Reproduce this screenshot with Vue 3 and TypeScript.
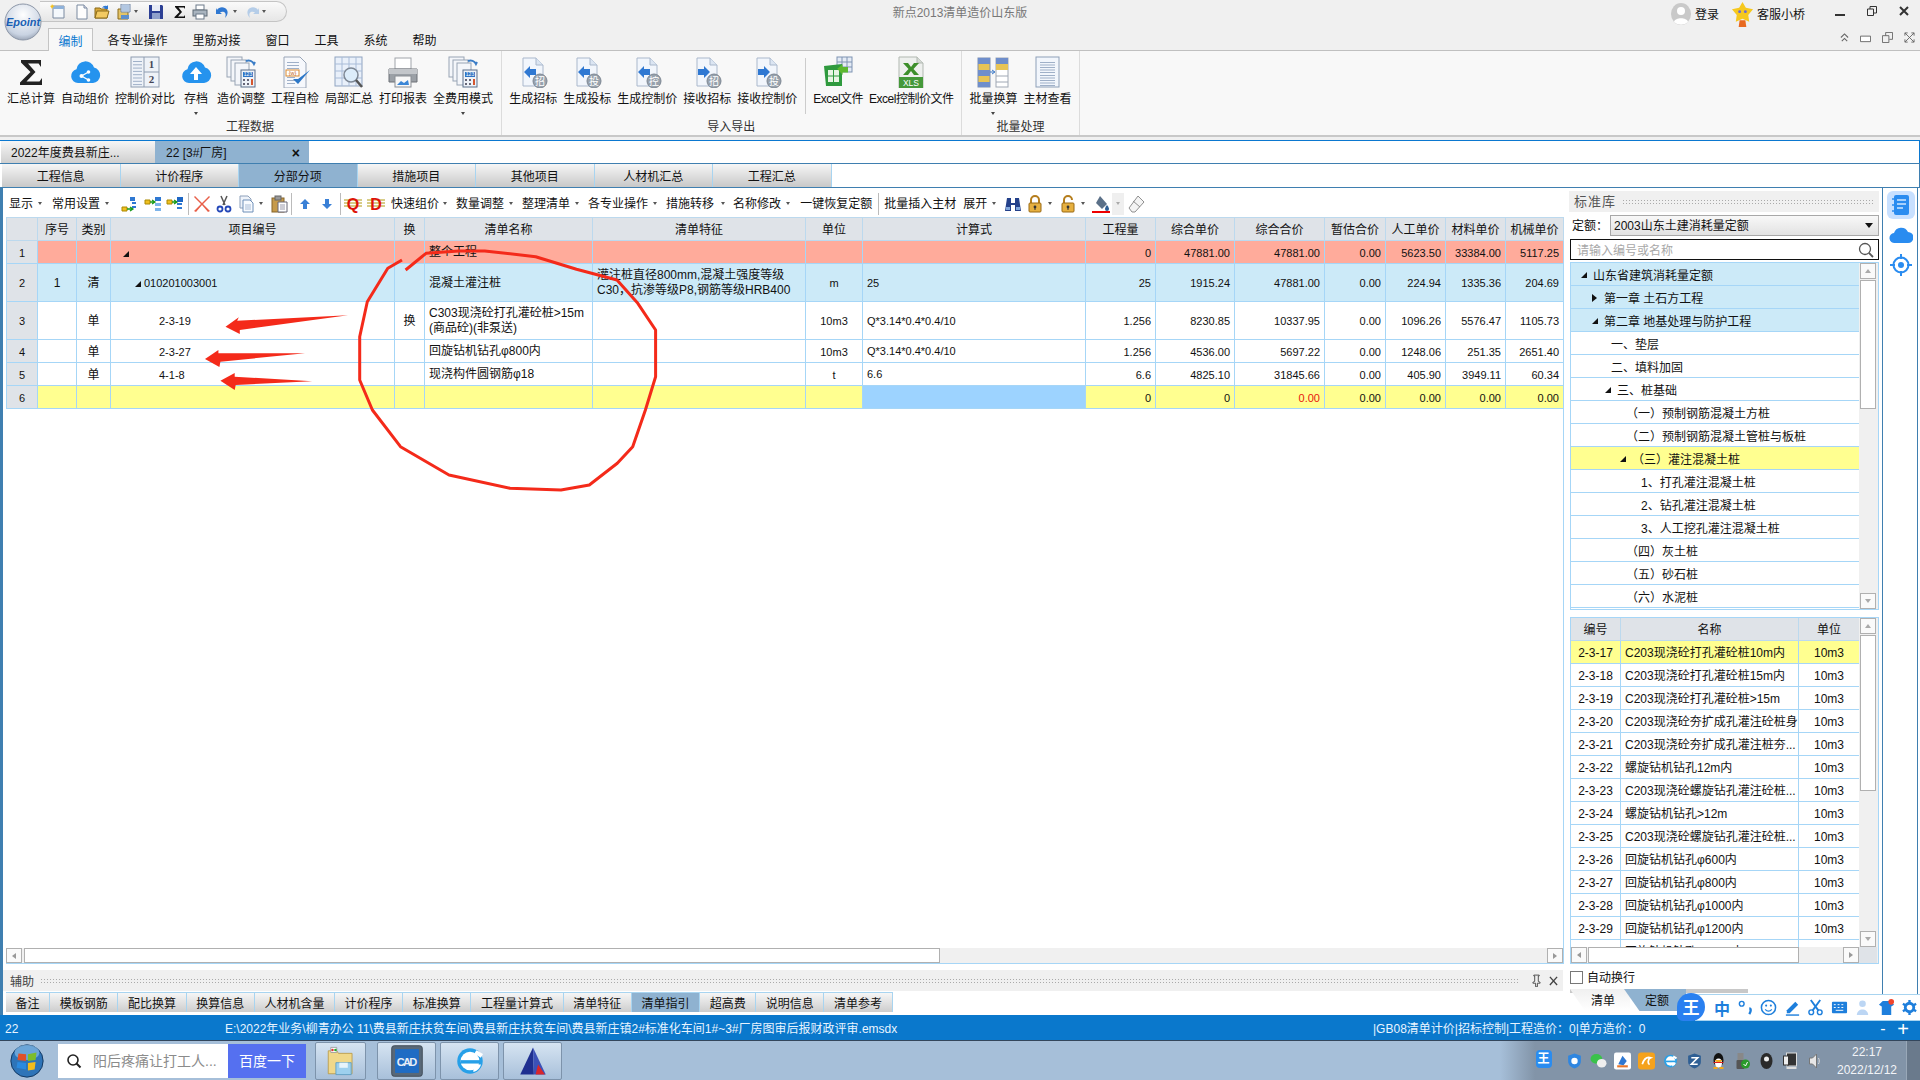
<script setup lang="ts">
// cost estimate desktop app, drawn flat with a bit of svg for icons
interface Tool { k: 'text' | 'icon' | 'caret' | 'sep' | 'box'; v?: string; ml: number }
interface RibbonItem { label: string; icon: string; caret?: boolean; wide?: boolean; tight?: boolean }

const text = (v: string, ml = 10): Tool => ({ k: 'text', v, ml })
const icon = (v: string, ml = 4): Tool => ({ k: 'icon', v, ml })
const caret = (ml = 5): Tool => ({ k: 'caret', ml })
const sep = (ml = 4): Tool => ({ k: 'sep', ml })

const cloud = 'M9 27a7 7 0 0 1-1.5-13.8 9 9 0 0 1 17.5-1.6A7.8 7.8 0 0 1 24 27z'
const page = (x: number, y: number, w: number, h: number) =>
  `<rect x="${x}" y="${y}" width="${w}" height="${h}" fill="#f4f6fa" stroke="#98a4b4"/>`
const calc = `<rect x="16" y="14" width="14" height="17" fill="#eef2f8" stroke="#5a6f8a"/><rect x="18" y="16" width="10" height="5" fill="#2f74c4"/><text x="23" y="20.4" font-size="5" fill="#fff" text-anchor="middle" font-family="Liberation Sans">123</text><path d="M18 23h2v2h-2zM22 23h2v2h-2zM18 27h2v2h-2zM22 27h2v2h-2z" fill="#667"/><path d="M26 23h2v6h-2z" fill="#d5562e"/>`
const lines = (x: number, y: number, w: number, n: number, step = 3) =>
  Array.from({ length: n }, (_, i) => `<path d="M${x} ${y + i * step + .5}h${w}" stroke="#9fb0c8"/>`).join('')
const docBadge = (dir: 'l' | 'r', ch: string) => {
  const arrow = dir === 'l' ? 'M4 12l6-6v3h6v6h-6v3z' : 'M16 12l-6-6v3H4v6h6v3z'
  return `<path d="M6 2h13l7 7v21H6z" fill="#f2f6fc" stroke="#aab8cc"/><path d="M19 2v7h7" fill="#dbe5f2" stroke="#aab8cc"/><path d="${arrow}" transform="translate(3 4)" fill="#2f78d2"/><circle cx="23" cy="25" r="7" fill="#98a2ad" stroke="#7d8793"/><text x="23" y="28.5" font-size="10" fill="#fff" text-anchor="middle" font-family="Noto Sans CJK SC">${ch}</text>`
}
const treeMove = (a: string, b: string) =>
  `<path d="M9 2h5v4H9z" fill="${a}"/><path d="M11 8h4M11 12h4" stroke="#2f78d2" stroke-width="2"/><path d="M1 12h5v4H1z" fill="${b}" stroke="#a80"/><path d="M6 14h5M9 12l3 2-3 2" stroke="#1a9a1a" fill="none" stroke-width="1.3"/>`

const icons: Record<string, string> = {
  sigma: '<path d="M6 4h20v7l-2.400-3.500H13l7.500 8.500-9 9.500h13l2.500-3.500v7H5v-2.500l10.500-10.500L6 6.500z" fill="#222"/>',
  cloudShare: `<path d="${cloud}" fill="#2593ee"/><path d="M12.500 20l7-4M12.500 20l7 4" stroke="#fff" stroke-width="1.300"/><circle cx="12.500" cy="20" r="2" fill="#fff"/><circle cx="19.500" cy="16" r="1.800" fill="#fff"/><circle cx="19.500" cy="24" r="1.800" fill="#fff"/>`,
  cloudUp: `<path d="${cloud}" fill="#2593ee"/><path d="M16 11l6 7h-4v6h-4v-6h-4z" fill="#fff"/>`,
  compare: `<rect x="2" y="1" width="28" height="30" fill="#eef2f8" stroke="#8e9cb0"/><path d="M15 1v30M15 16h15" stroke="#8e9cb0"/>${lines(4, 5, 9, 8, 3.3)}<text x="22.500" y="12" font-size="11" font-weight="700" fill="#445" text-anchor="middle" font-family="Liberation Serif">1</text><text x="22.500" y="27" font-size="11" font-weight="700" fill="#445" text-anchor="middle" font-family="Liberation Serif">2</text>`,
  adjust: `${page(2, 1, 15, 20)}${page(6, 4, 15, 21)}${page(10, 7, 14, 22)}<path d="M21 5a6 6 0 0 1 8 3l1-2" fill="none" stroke="#3b7dc6" stroke-width="2"/>${calc}`,
  check: `<path d="M5 1h16l6 6v25H5z" fill="#f6f8fc" stroke="#9aa6b8"/>${lines(8, 6, 12, 3)}${lines(8, 21, 8, 3)}<rect x="7" y="14" width="13" height="6" fill="#fff" stroke="#d98a30"/><text x="13.500" y="19" font-size="5.500" fill="#c4601a" text-anchor="middle" font-family="Liberation Sans">{w}</text><path d="M14 23l5 5 12-14-12 9z" fill="#2d78c8"/>`,
  gridMag: `<rect x="2" y="1" width="27" height="29" fill="#e9f0fa" stroke="#8fa3c0"/><path d="M2 8h27M2 15h27M2 22h27M9 1v29M16 1v29M23 1v29" stroke="#a9bcd8"/><circle cx="18" cy="19" r="7" fill="#dcecfa" stroke="#7d8794" stroke-width="1.500"/><path d="M23 24l6 7" stroke="#555" stroke-width="2.500"/>`,
  printer: `<rect x="8" y="2" width="16" height="11" fill="#fff" stroke="#a0a4aa"/><path d="M2 13h28v13H2z" fill="#9ba0a6" stroke="#6c7076"/><path d="M2 13h28v5H2z" fill="#c3c6ca"/><rect x="8" y="20" width="16" height="11" fill="#f8f8f8" stroke="#8a8e94"/><path d="M10 29l4-4 3 2 4-3 1 5z" fill="#3b86d6"/>`,
  docZhaoL: docBadge('l', '招'),
  docTouL: docBadge('l', '投'),
  docKongL: docBadge('l', '控'),
  docZhaoR: docBadge('r', '招'),
  docTouR: docBadge('r', '投'),
  excel: `<rect x="15" y="1" width="15" height="15" fill="#e4ebf5" stroke="#7e93b2"/><path d="M15 6h15M15 11h15M20 1v15M25 1v15" stroke="#7e93b2"/><path d="M2 10l18-2v22H4z" fill="#2f9a3e"/><path d="M6 14h11v12H6z" fill="#e9f5e5"/><path d="M6 20h11M11.500 14v12" stroke="#2f9a3e"/><path d="M18 12l6-5v3h6v6h-6v3z" fill="#5cb82f" transform="translate(-1 2) scale(.9)"/>`,
  xls: `<path d="M4 1h18l6 6v25H4z" fill="#eef0ee" stroke="#b1b8b1"/><path d="M22 1v6h6" fill="#d5d9d5" stroke="#b1b8b1"/><path d="M8 7h5l3 4 3-4h5l-5.500 6 5.500 6h-5l-3-4-3 4H8l5.500-6z" fill="#3d8f2b"/><path d="M4 21h24v11H4z" fill="#45993a"/><text x="16" y="30" font-size="8.500" fill="#fff" text-anchor="middle" font-family="Liberation Sans">XLS</text>`,
  batch: `<rect x="1" y="2" width="12" height="29" fill="#e8c455" stroke="#7f90ae"/><path d="M1 2h12v6H1zM1 14h12v6H1zM1 26h12v5H1z" fill="#6f8ecb"/><rect x="19" y="2" width="12" height="29" fill="#fff" stroke="#a0a8b4"/><path d="M19 2h12v6H19z" fill="#6f8ecb"/><path d="M19 8h12v6H19z" fill="#e8c455"/><path d="M19 20h12M19 26h12" stroke="#a0a8b4"/><path d="M13 16h4M15 14l3 2-3 2" stroke="#3b78c8" fill="none"/>`,
  material: `<rect x="5" y="1" width="23" height="30" fill="#f2f6fc" stroke="#8ea0b8"/>${lines(9, 6, 15, 5, 2.500)}${lines(9, 19, 15, 5, 2.500)}`,

  tree1: treeMove('#2f78d2', '#f0c020'),
  tree2: '<path d="M1 5h5v4H1z" fill="#f0c020" stroke="#a80"/><path d="M6 7h4M8 5l3 2-3 2" stroke="#1a9a1a" fill="none" stroke-width="1.300"/><path d="M11 2h6v4h-6z" fill="#2f78d2"/><path d="M11 8h6v3h-6zM11 13h6v3h-6z" fill="#7db4ea"/>',
  tree3: '<path d="M1 5h5v4H1z" fill="#f0c020" stroke="#a80"/><path d="M6 7h4M8 5l3 2-3 2" stroke="#1a9a1a" fill="none" stroke-width="1.300"/><path d="M11 2h6v5h-6z" fill="#1d66c4"/><path d="M11 9h5M11 13h5" stroke="#2f78d2" stroke-width="2"/>',
  del: '<path d="M2 1l7 7 7-7 1 1-7 7 7 7-2 1-6-7-6 7-2-1 7-7-7-7z" fill="#e8604a"/>',
  cut: '<path d="M6 1l4 9M12 1l-4 9" stroke="#555" stroke-width="1.500"/><circle cx="5" cy="14" r="2.500" fill="none" stroke="#2347b8" stroke-width="1.800"/><circle cx="13" cy="14" r="2.500" fill="none" stroke="#2347b8" stroke-width="1.800"/>',
  copy: '<path d="M3 1h8l3 3v9H3z" fill="#eef3fa" stroke="#8da0ba"/><path d="M6 5h7l3 3v9H6z" fill="#f8fbff" stroke="#6f8fb8"/><path d="M8 10h6M8 12h6M8 14h6" stroke="#a9bcd6"/>',
  paste: '<rect x="2" y="3" width="12" height="14" fill="#c69a4a" stroke="#85642a"/><rect x="5" y="1" width="6" height="4" fill="#999" stroke="#666"/><path d="M8 7h9v10H8z" fill="#fff" stroke="#667"/><path d="M10 10h5M10 12h5M10 14h5" stroke="#99a"/>',
  up: '<path d="M9 4l5 5h-3v5H7V9H4z" fill="#3a80d6"/>',
  down: '<path d="M9 14l5-5h-3V4H7v5H4z" fill="#3a80d6"/>',
  q: '<path d="M0 5h18M0 8h18M0 11h18" stroke="#b09a10"/><text x="9" y="15" font-size="16" font-weight="700" fill="#dd1408" text-anchor="middle" font-family="Liberation Sans">Q</text>',
  d: '<path d="M0 5h18M0 8h18M0 11h18" stroke="#b09a10"/><text x="9" y="15" font-size="16" font-weight="700" fill="#dd1408" text-anchor="middle" font-family="Liberation Sans">D</text>',
  binoc: '<path d="M3 3h4v5h4V3h4l2 13h-6V10H7v6H1z" fill="#23408a"/><path d="M2 12h4v3H2zM12 12h4v3h-4z" fill="#7fa6dc"/>',
  lock: '<path d="M5 9V5a4 4 0 0 1 8 0v4" fill="none" stroke="#b57d1c" stroke-width="2"/><rect x="3" y="8" width="12" height="9" rx="1" fill="#e6b040" stroke="#9a6a14"/><circle cx="9" cy="12" r="1.400" fill="#333"/><path d="M8.500 12h1v3h-1z" fill="#333"/>',
  unlock: '<path d="M5 8V5a4 4 0 0 1 8 0" fill="none" stroke="#b57d1c" stroke-width="2"/><rect x="3" y="8" width="12" height="9" rx="1" fill="#e6b040" stroke="#9a6a14"/><circle cx="9" cy="12" r="1.400" fill="#333"/><path d="M8.500 12h1v3h-1z" fill="#333"/>',
  fill: '<path d="M8 1l7 8-5 5-6-6z" fill="#5b7088"/><path d="M15 10c1.500 2 2 3 2 4a2 2 0 0 1-4 0c0-1 .5-2 2-4z" fill="#2f5f94"/><rect x="0" y="16" width="18" height="2.500" fill="#ee0000"/>',
  eraser: '<path d="M11 1l6 6-9 10H5l-3-4z" fill="#f4f4f4" stroke="#8f8f8f"/><path d="M6 6l7 6" stroke="#8f8f8f"/>',

  qNew: '<path d="M3 2h11v12H3z" fill="#f4f8fc" stroke="#7a8aa0"/><path d="M3 2h11v3H3z" fill="#8fb2da"/><path d="M2 0l1 1.500L5 2 3 3l-1 2-1-2-1-1 1.500-.5z" fill="#f6c21c"/>',
  qDoc: '<path d="M3 1h7l3 3v11H3z" fill="#fdfdfd" stroke="#7a8aa0"/><path d="M10 1v3h3" fill="#dde" stroke="#7a8aa0"/>',
  qOpen: '<path d="M1 4h5l1 1h6v9H1z" fill="#d9a93a" stroke="#8a6a1a"/><path d="M3 7h12l-2 7H1z" fill="#f3ca62" stroke="#8a6a1a"/><path d="M8 4a4 4 0 0 1 5-2l1-1v4h-4l1-1a3 3 0 0 0-3 0z" fill="#2f78d2"/>',
  qSaveAs: '<path d="M2 5h10v10H2z" fill="#e4c468" stroke="#8a6a1a"/><path d="M5 0h9v8H5z" fill="#e6eef8" stroke="#7288a8"/><path d="M6 2h7M6 4h7M6 6h7" stroke="#7ea0cc"/><path d="M5 11h8v4H5z" fill="#5e8fcc"/>',
  qSave: '<path d="M1 1h13l1 1v13H1z" fill="#2c3f94"/><rect x="4" y="1" width="8" height="6" fill="#e8ecf6"/><rect x="4" y="9" width="8" height="6" fill="#8fa0cc"/>',
  qSigma: '<path d="M3 2h10v3l-1-1.500H6.500L10 8l-4 4.500h6l1-1.500v3H2.500v-1L7.500 8 3 3z" fill="#111"/>',
  qPrint: '<rect x="4" y="1" width="8" height="5" fill="#fff" stroke="#6c7a8a"/><rect x="1" y="6" width="14" height="6" fill="#a9b4bf" stroke="#5e6a76"/><rect x="4" y="10" width="8" height="5" fill="#fff" stroke="#6c7a8a"/>',
  qUndo: '<path d="M2 6a6 6 0 0 1 10 0c1.500 3 0 6-2 8 1-3 1-5-1-6-1.500-.7-3-.3-4 .5L7 10H1V4z" fill="#2f78d2"/>',
  qRedo: '<path d="M14 6a6 6 0 0 0-10 0c-1.500 3 0 6 2 8-1-3-1-5 1-6 1.500-.7 3-.3 4 .5L9 10h6V4z" fill="#b5cde8"/>',

  folder: '<path d="M5 8h10l2 3h16v24H5z" fill="#f0d88a" stroke="#b89a48"/><path d="M8 4h7v6H8z" fill="#fff" stroke="#999"/><circle cx="10" cy="7" r="1.500" fill="#d33"/><circle cx="13.500" cy="7" r="1.500" fill="#2a2"/><path d="M14 22h18v14H14z" fill="#9dd0ee" stroke="#5a9cc4"/><path d="M18 22h10v6H18z" fill="#e7f4fb"/>',
  cad: '<rect x="2" y="2" width="36" height="36" rx="3" fill="#586878" stroke="#39434e"/><rect x="6" y="6" width="28" height="28" fill="#1f6cc4"/><text x="20" y="26" font-size="13" font-weight="700" fill="#e8eef6" text-anchor="middle" font-family="Liberation Sans" textLength="24">CAD</text>',
  ie: '<circle cx="20" cy="20" r="15" fill="#27a0e8"/><circle cx="20" cy="20" r="11" fill="#fff"/><path d="M9 19h23v4H9z" fill="#27a0e8"/><path d="M24 24h9a13 13 0 0 1-9 9z" fill="#fff"/><path d="M26 9h9v5h-9z" fill="#fff" transform="rotate(30 30 11)"/>',
  tri: '<path d="M20 4L5 36h16z" fill="#1f2f90"/><path d="M20 4l15 32H21z" fill="#3b51b8"/><path d="M26 24l8 12h-11z" fill="#d8262c"/>',
  orb: '<circle cx="20" cy="20" r="17" fill="#2e74b8" stroke="#12365e"/><ellipse cx="20" cy="11" rx="13" ry="8" fill="#8cc0ea" opacity=".65"/><path d="M11 12l8 1v7l-9-1z" fill="#e0502a"/><path d="M21 13l9-2-1 8-8 1z" fill="#7cbc2c"/><path d="M10 21l9 1v7l-10-2z" fill="#2a8ae0"/><path d="M21 22l8-1-1 8-7 1z" fill="#f2bc1c"/>',
}

const ribbonGroups: { label: string; groups: (RibbonItem | null)[] }[] = [
  {
    label: '工程数据',
    groups: [
      { label: '汇总计算', icon: 'sigma' },
      { label: '自动组价', icon: 'cloudShare' },
      { label: '控制价对比', icon: 'compare' },
      { label: '存档', icon: 'cloudUp', caret: true, wide: true },
      { label: '造价调整', icon: 'adjust' },
      { label: '工程自检', icon: 'check' },
      { label: '局部汇总', icon: 'gridMag' },
      { label: '打印报表', icon: 'printer' },
      { label: '全费用模式', icon: 'adjust', caret: true },
    ],
  },
  {
    label: '导入导出',
    groups: [
      { label: '生成招标', icon: 'docZhaoL' },
      { label: '生成投标', icon: 'docTouL' },
      { label: '生成控制价', icon: 'docKongL' },
      { label: '接收招标', icon: 'docZhaoR' },
      { label: '接收控制价', icon: 'docTouR' },
      null,
      { label: 'Excel文件', icon: 'excel', tight: true },
      { label: 'Excel控制价文件', icon: 'xls', tight: true },
    ],
  },
  {
    label: '批量处理',
    groups: [
      { label: '批量换算', icon: 'batch', caret: true },
      { label: '主材查看', icon: 'material' },
    ],
  },
]

const quick: Tool[] = [
  icon('qNew', 10), icon('qDoc', 8), icon('qOpen', 4), icon('qSaveAs', 6), caret(2),
  icon('qSave', 10), icon('qSigma', 8), icon('qPrint', 4), icon('qUndo', 7), caret(2),
  icon('qRedo', 7), caret(2),
]

const tools: Tool[] = [
  text('显示', 6), caret(), text('常用设置'), caret(),
  icon('tree1', 12), icon('tree2', 5), icon('tree3', 4), sep(),
  icon('del'), icon('cut'), icon('copy'), caret(4), icon('paste', 7), sep(3),
  icon('up'), icon('down'), sep(), icon('q', 3), icon('d', 5),
  text('快速组价', 6), caret(4), text('数量调整', 9), caret(), text('整理清单', 9), caret(),
  text('各专业操作', 9), caret(), text('措施转移', 9), caret(7), text('名称修改', 8), caret(),
  text('一键恢复定额', 10), sep(6), text('批量插入主材', 5), text('展开', 7), caret(),
  icon('binoc', 8), icon('lock'), caret(4), icon('unlock', 7), caret(4), icon('fill', 7),
  { k: 'box', ml: 2 }, icon('eraser', 3),
]

const columns = [
  { t: '', w: 31 }, { t: '序号', w: 39 }, { t: '类别', w: 34 }, { t: '项目编号', w: 284 },
  { t: '换', w: 30 }, { t: '清单名称', w: 168 }, { t: '清单特征', w: 213 }, { t: '单位', w: 57 },
  { t: '计算式', w: 223 }, { t: '工程量', w: 70 }, { t: '综合单价', w: 79 }, { t: '综合合价', w: 90 },
  { t: '暂估合价', w: 61 }, { t: '人工单价', w: 60 }, { t: '材料单价', w: 60 }, { t: '机械单价', w: 58 },
]

const rows = [
  { cls: 'total', seq: '', type: '', code: '', lv: 'lv0', tri: true, swap: '', name: '整个工程', spec: '', unit: '', calc: '', nums: ['0', '47881.00', '47881.00', '0.00', '5623.50', '33384.00', '5117.25'] },
  { cls: 'bill tall', seq: '1', type: '清', code: '010201003001', lv: 'lv1', tri: true, swap: '', name: '混凝土灌注桩', spec: '灌注桩直径800mm,混凝土强度等级\nC30，抗渗等级P8,钢筋等级HRB400', unit: 'm', calc: '25', nums: ['25', '1915.24', '47881.00', '0.00', '224.94', '1335.36', '204.69'] },
  { cls: 'tall', seq: '', type: '单', code: '2-3-19', lv: 'lv2', tri: false, swap: '换', name: 'C303现浇砼打孔灌砼桩>15m\n(商品砼)(非泵送)', spec: '', unit: '10m3', calc: 'Q*3.14*0.4*0.4/10', nums: ['1.256', '8230.85', '10337.95', '0.00', '1096.26', '5576.47', '1105.73'] },
  { cls: '', seq: '', type: '单', code: '2-3-27', lv: 'lv2', tri: false, swap: '', name: '回旋钻机钻孔φ800内', spec: '', unit: '10m3', calc: 'Q*3.14*0.4*0.4/10', nums: ['1.256', '4536.00', '5697.22', '0.00', '1248.06', '251.35', '2651.40'] },
  { cls: '', seq: '', type: '单', code: '4-1-8', lv: 'lv2', tri: false, swap: '', name: '现浇构件圆钢筋φ18', spec: '', unit: 't', calc: '6.6', nums: ['6.6', '4825.10', '31845.66', '0.00', '405.90', '3949.11', '60.34'] },
  { cls: 'fresh', seq: '', type: '', code: '', lv: 'lv0', tri: false, swap: '', name: '', spec: '', unit: '', calc: '', nums: ['0', '0', '0.00', '0.00', '0.00', '0.00', '0.00'] },
]

const tree = [
  { t: '山东省建筑消耗量定额', cls: 'on', x: 22, tri: 'down' },
  { t: '第一章 土石方工程', cls: 'on', x: 33, tri: 'right' },
  { t: '第二章 地基处理与防护工程', cls: 'on', x: 33, tri: 'down' },
  { t: '一、垫层', cls: '', x: 40, tri: '' },
  { t: '二、填料加固', cls: '', x: 40, tri: '' },
  { t: '三、桩基础', cls: '', x: 46, tri: 'down' },
  { t: '（一）预制钢筋混凝土方桩', cls: '', x: 55, tri: '' },
  { t: '（二）预制钢筋混凝土管桩与板桩', cls: '', x: 55, tri: '' },
  { t: '（三）灌注混凝土桩', cls: 'pick', x: 61, tri: 'down' },
  { t: '1、打孔灌注混凝土桩', cls: '', x: 70, tri: '' },
  { t: '2、钻孔灌注混凝土桩', cls: '', x: 70, tri: '' },
  { t: '3、人工挖孔灌注混凝土桩', cls: '', x: 70, tri: '' },
  { t: '（四）灰土桩', cls: '', x: 55, tri: '' },
  { t: '（五）砂石桩', cls: '', x: 55, tri: '' },
  { t: '（六）水泥桩', cls: '', x: 55, tri: '' },
]

const quota = [
  ['2-3-17', 'C203现浇砼打孔灌砼桩10m内'], ['2-3-18', 'C203现浇砼打孔灌砼桩15m内'],
  ['2-3-19', 'C203现浇砼打孔灌砼桩>15m'], ['2-3-20', 'C203现浇砼夯扩成孔灌注砼桩身'],
  ['2-3-21', 'C203现浇砼夯扩成孔灌注桩夯...'], ['2-3-22', '螺旋钻机钻孔12m内'],
  ['2-3-23', 'C203现浇砼螺旋钻孔灌注砼桩...'], ['2-3-24', '螺旋钻机钻孔>12m'],
  ['2-3-25', 'C203现浇砼螺旋钻孔灌注砼桩...'], ['2-3-26', '回旋钻机钻孔φ600内'],
  ['2-3-27', '回旋钻机钻孔φ800内'], ['2-3-28', '回旋钻机钻孔φ1000内'],
  ['2-3-29', '回旋钻机钻孔φ1200内'], ['', '回旋钻机钻孔φ1500内'],
]

const docNav = ['工程信息', '计价程序', '分部分项', '措施项目', '其他项目', '人材机汇总', '工程汇总']
const ribbonTabs = ['各专业操作', '里筋对接', '窗口', '工具', '系统', '帮助']
const auxTabs = ['备注', '模板钢筋', '配比换算', '换算信息', '人材机含量', '计价程序', '标准换算', '工程量计算式', '清单特征', '清单指引', '超高费', '说明信息', '清单参考']
</script>

<template>
  <div class="app">
    <header class="titlebar">
      <div class="quick">
        <template v-for="(q, i) in quick" :key="i">
          <svg v-if="q.k === 'icon'" class="qi" viewBox="0 0 16 16" :style="{ marginLeft: q.ml + 'px' }" v-html="icons[q.v!]" />
          <i v-else class="caret" :style="{ marginLeft: q.ml + 'px' }" />
        </template>
      </div>
      <div class="app-title">新点2013清单造价山东版</div>
      <div class="account">
        <svg class="avatar" viewBox="0 0 20 22"><ellipse cx="10" cy="11" rx="10" ry="11" fill="#c9c9c9" /><circle cx="10" cy="8" r="4" fill="#fff" /><path d="M3 19c1-5 13-5 14 0a10 10 0 0 1-14 0z" fill="#fff" /></svg>
        <span class="login">登录</span>
        <svg class="star" viewBox="0 0 24 26"><path d="M12 0l3.500 6 7.500 1.500-5 6 1 7-7-3-7 3 1-7-5-6L8.500 6z" fill="#f6c81e" /><circle cx="9" cy="10" r="1.500" fill="#6a6ad8" /><circle cx="15" cy="10" r="1.500" fill="#6a6ad8" /><path d="M9 19h6l1 7H8z" fill="#e86a20" /></svg>
        <span class="helper">客服小桥</span>
        <svg class="winbtn first" viewBox="0 0 10 10"><path d="M0 8h10v2H0z" fill="#333" /></svg>
        <svg class="winbtn" viewBox="0 0 10 10"><path d="M.5 3h6v6.500h-6zM3 3V.5h6.500V7H7" fill="none" stroke="#333" /></svg>
        <svg class="winbtn" viewBox="0 0 10 10"><path d="M1 1l8 8M9 1l-8 8" stroke="#333" stroke-width="2" /></svg>
      </div>
    </header>
    <svg class="logo" viewBox="0 0 38 38">
      <defs><radialGradient id="lg" cx=".5" cy=".3" r=".8"><stop offset="0" stop-color="#ffffff" /><stop offset=".7" stop-color="#c9d3e2" /><stop offset="1" stop-color="#7f8a9c" /></radialGradient></defs>
      <circle cx="19" cy="19" r="18" fill="url(#lg)" stroke="#8d97a8" />
      <text x="19" y="23" font-size="11" font-weight="700" font-style="italic" fill="#1a5fb4" text-anchor="middle" font-family="Liberation Sans">Epoint</text>
    </svg>

    <nav class="ribbon-tabs">
      <span class="rtab active">编制</span>
      <span v-for="t in ribbonTabs" :key="t" class="rtab">{{ t }}</span>
      <div class="mdi">
        <svg viewBox="0 0 10 10" class="mi"><path d="M1 5l4-4 4 4M2 9l3-3 3 3" fill="none" stroke="#666" stroke-width="1.200" /></svg>
        <svg viewBox="0 0 12 10" class="mi wide"><path d="M.5 3.500h11v6H.5z" fill="#fff" stroke="#666" /></svg>
        <svg viewBox="0 0 12 12" class="mi wide"><path d="M.5 4h7v7.500h-7zM4 4V.5h7.500V8H8" fill="none" stroke="#666" /></svg>
        <svg viewBox="0 0 12 12" class="mi wide"><path d="M1 1l10 10M11 1L1 11M4 1H1v3M8 1h3v3M4 11H1V8M8 11h3V8" fill="none" stroke="#666" /></svg>
      </div>
    </nav>

    <section class="ribbon">
      <div v-for="g in ribbonGroups" :key="g.label" class="rgroup">
        <div class="ritems">
          <template v-for="(it, i) in g.groups" :key="i">
            <div v-if="it" class="ritem" :class="{ wide: it.wide, tight: it.tight }">
              <svg class="ricon" viewBox="0 0 32 32" v-html="icons[it.icon]" />
              <span class="rlabel">{{ it.label }}</span>
              <i v-if="it.caret" class="caret rcaret" />
            </div>
            <div v-else class="rsep" />
          </template>
        </div>
        <div class="rgroup-label">{{ g.label }}</div>
      </div>
    </section>

    <div class="doc-tabs">
      <span class="doc-tab">2022年度费县新庄...</span>
      <span class="doc-tab active">22 [3#厂房]<b class="doc-close">×</b></span>
    </div>
    <div class="nav-tabs">
      <span v-for="t in docNav" :key="t" class="nav-tab" :class="{ active: t === '分部分项' }">{{ t }}</span>
    </div>

    <main class="main">
      <div class="left">
        <div class="toolbar">
          <template v-for="(t, i) in tools" :key="i">
            <span v-if="t.k === 'text'" class="tb-text" :style="{ marginLeft: t.ml + 'px' }">{{ t.v }}</span>
            <svg v-else-if="t.k === 'icon'" class="tb-icon" viewBox="0 0 18 18" :style="{ marginLeft: t.ml + 'px' }" v-html="icons[t.v!]" />
            <i v-else-if="t.k === 'caret'" class="caret" :style="{ marginLeft: t.ml + 'px' }" />
            <i v-else-if="t.k === 'sep'" class="tb-sep" :style="{ marginLeft: t.ml + 'px' }" />
            <span v-else class="tb-box" :style="{ marginLeft: t.ml + 'px' }"><i class="caret pale" /></span>
          </template>
        </div>

        <div class="grid-wrap">
          <table class="grid">
            <colgroup><col v-for="(c, i) in columns" :key="i" :style="{ width: c.w + 'px' }" /></colgroup>
            <thead><tr><th v-for="(c, i) in columns" :key="i">{{ c.t }}</th></tr></thead>
            <tbody>
              <tr v-for="(r, i) in rows" :key="i" :class="r.cls">
                <td class="rownum">{{ i + 1 }}</td>
                <td class="ctr">{{ r.seq }}</td>
                <td class="ctr">{{ r.type }}</td>
                <td :class="['code', r.lv]"><i v-if="r.tri" class="tri" />{{ r.code }}</td>
                <td class="ctr">{{ r.swap }}</td>
                <td class="txt">{{ r.name }}</td>
                <td class="txt">{{ r.spec }}</td>
                <td class="ctr unit">{{ r.unit }}</td>
                <td class="txt calc">{{ r.calc }}</td>
                <td v-for="(n, j) in r.nums" :key="j" class="num" :class="{ red: r.cls === 'fresh' && j === 2 }">{{ n }}</td>
              </tr>
            </tbody>
          </table>
          <div class="hbar">
            <span class="sb-btn"><i class="ar ar-l" /></span>
            <span class="sb-thumb grid-thumb" />
            <span class="sb-btn end"><i class="ar ar-r" /></span>
          </div>
        </div>

        <div class="aux-head">
          <span class="aux-title">辅助</span>
          <span class="dots" />
          <svg class="aux-ico" viewBox="0 0 10 14"><path d="M2 1h6v1H7v6l2 1v1H6v4H4v-4H1V9l2-1V2H2z" fill="none" stroke="#444" /></svg>
          <svg class="aux-ico" viewBox="0 0 10 14"><path d="M1 3l8 9M9 3l-8 9" stroke="#444" stroke-width="1.500" /></svg>
        </div>
        <div class="aux-tabs">
          <span v-for="t in auxTabs" :key="t" class="aux-tab" :class="{ active: t === '清单指引' }">{{ t }}</span>
        </div>
      </div>

      <aside class="panel">
        <div class="panel-head">
          <span class="panel-title">标准库</span>
          <span class="dots" />
        </div>
        <div class="quota-row">
          <label class="quota-label">定额：</label>
          <div class="select"><span>2003山东土建消耗量定额</span><i class="sel-ar" /></div>
        </div>
        <div class="search">
          <span class="ph">请输入编号或名称</span>
          <svg class="mag" viewBox="0 0 16 16"><circle cx="7" cy="7" r="5.500" fill="none" stroke="#555" stroke-width="1.300" /><path d="M11 11l4 4" stroke="#555" stroke-width="1.800" /></svg>
        </div>

        <div class="tree-frame">
          <div class="tree">
            <div v-for="n in tree" :key="n.t" class="tree-row" :class="n.cls" :style="{ paddingLeft: n.x + 'px' }">
              <i v-if="n.tri" class="tree-tri" :class="n.tri" />{{ n.t }}
            </div>
          </div>
          <div class="vbar">
            <span class="sb-btn v"><i class="ar ar-u" /></span>
            <span class="sb-thumb tree-thumb" />
            <span class="sb-btn v end"><i class="ar ar-d" /></span>
          </div>
        </div>

        <div class="quota-frame">
          <div class="quota-body">
            <div class="quota-list">
              <div class="q-row head"><span>编号</span><span>名称</span><span>单位</span></div>
              <div v-for="(q, i) in quota" :key="i" class="q-row" :class="{ pick: i === 0 }">
                <span>{{ q[0] }}</span><span class="q-name">{{ q[1] }}</span><span>{{ q[0] ? '10m3' : '' }}</span>
              </div>
            </div>
            <div class="vbar">
              <span class="sb-btn v"><i class="ar ar-u" /></span>
              <span class="sb-thumb quota-thumb" />
              <span class="sb-btn v end"><i class="ar ar-d" /></span>
            </div>
          </div>
          <div class="q-hbar">
            <span class="sb-btn"><i class="ar ar-l" /></span>
            <span class="sb-thumb q-thumb" />
            <span class="sb-btn end"><i class="ar ar-r" /></span>
            <span class="q-corner" />
          </div>
        </div>

        <label class="wrap-check"><i class="box" />自动换行</label>
        <div class="panel-tabs">
          <span class="ptab">清单</span>
          <span class="ptab active">定额</span>
        </div>
      </aside>

      <aside class="side">
        <span class="side-btn on">
          <svg viewBox="0 0 24 24"><rect x="5" y="2" width="15" height="20" rx="2" fill="#2a8cf0" /><path d="M8 7h9M8 11h9M8 15h6" stroke="#cfe6ff" stroke-width="1.500" /><path d="M3 6h3M3 12h3M3 18h3" stroke="#2a8cf0" stroke-width="1.500" /></svg>
        </span>
        <span class="side-btn">
          <svg viewBox="0 0 24 24"><path d="M6 20a5 5 0 0 1-1-10 7.500 7.500 0 0 1 14-1 5.500 5.500 0 0 1 0 11z" fill="#2a8cf0" /></svg>
        </span>
        <span class="side-btn">
          <svg viewBox="0 0 24 24"><circle cx="12" cy="12" r="7.500" fill="none" stroke="#2a8cf0" stroke-width="2" /><circle cx="12" cy="12" r="3" fill="#2a8cf0" /><path d="M12 1v5M12 18v5M1 12h5M18 12h5" stroke="#2a8cf0" stroke-width="2" /></svg>
        </span>
      </aside>
    </main>

    <footer class="status">
      <span class="st-id">22</span>
      <span class="st-path">E:\2022年业务\柳青办公 11\费县新庄扶贫车间\费县新庄扶贫车间\费县新庄镇2#标准化车间1#~3#厂房图审后报财政评审.emsdx</span>
      <span class="st-info">|GB08清单计价|招标控制|工程造价：0|单方造价：0</span>
      <span class="st-zoom">-</span>
      <span class="st-zoom big">+</span>
    </footer>

    <div class="taskbar">
      <svg class="orb" viewBox="0 0 40 40" v-html="icons.orb" />
      <div class="web-search">
        <svg class="ws-mag" viewBox="0 0 16 16"><circle cx="7" cy="7" r="5" fill="none" stroke="#222" stroke-width="1.600" /><path d="M10.500 10.500l4 4" stroke="#222" stroke-width="2" /></svg>
        <span class="ws-text">阳后疼痛让打工人...</span>
        <span class="ws-btn">百度一下</span>
      </div>
      <span class="task first"><svg viewBox="0 0 40 40" v-html="icons.folder" /></span>
      <span class="task mid"><svg viewBox="0 0 40 40" v-html="icons.cad" /></span>
      <span class="task mid"><svg viewBox="0 0 40 40" v-html="icons.ie" /></span>
      <span class="task mid"><svg viewBox="0 0 40 40" v-html="icons.tri" /></span>
      <div class="tray">
        <span class="tray-wang">王</span>
        <svg class="ti" viewBox="0 0 16 16"><path d="M8 1l6 2v5c0 4-3 6-6 7-3-1-6-3-6-7V3z" fill="#2f86e0" /><circle cx="8" cy="8" r="3" fill="#fff" /></svg>
        <svg class="ti" viewBox="0 0 16 16"><ellipse cx="6" cy="6" rx="5.500" ry="4.500" fill="#3ac24a" /><ellipse cx="11" cy="10" rx="4.500" ry="4" fill="#eee" /></svg>
        <svg class="ti" viewBox="0 0 16 16"><rect width="16" height="16" rx="2" fill="#fff" /><path d="M4 11l4-8 4 5-3 4z" fill="#2f78d2" /><path d="M3 12h10v2H3z" fill="#e8762a" /></svg>
        <svg class="ti" viewBox="0 0 16 16"><rect width="16" height="16" rx="3" fill="#f5a21c" /><path d="M4 11c2-6 5-7 8-6-3 1-3 6-1 6" fill="none" stroke="#fff" stroke-width="1.600" /></svg>
        <svg class="ti" viewBox="0 0 40 40" v-html="icons.ie" />
        <svg class="ti" viewBox="0 0 16 16"><path d="M8 1l6 2v6c0 3-3 5-6 6-3-1-6-3-6-6V3z" fill="#2f5f94" /><path d="M5 5h6L5 11h6" fill="none" stroke="#fff" stroke-width="1.500" /></svg>
        <svg class="ti" viewBox="0 0 16 18"><ellipse cx="8" cy="8" rx="5" ry="7" fill="#111" /><ellipse cx="8" cy="11" rx="3.500" ry="4.500" fill="#fff" /><path d="M4 8h8l-2 2H6z" fill="#f2a81c" /><path d="M3 15h4v2H3zM9 15h4v2H9z" fill="#f2a81c" /><path d="M3 10h10v1H3z" fill="#d22" /></svg>
        <svg class="ti" viewBox="0 0 16 18"><rect x="3" y="1" width="6" height="7" fill="#888" /><rect x="2" y="8" width="8" height="9" rx="1" fill="#555" /><circle cx="11" cy="12" r="4.500" fill="#2a9a2a" /><path d="M9 12l2 2 2-4" fill="none" stroke="#fff" /></svg>
        <svg class="ti" viewBox="0 0 16 18"><ellipse cx="8" cy="9" rx="6" ry="8" fill="#2a2a2a" /><circle cx="8" cy="7" r="2.500" fill="#eee" /></svg>
        <svg class="ti" viewBox="0 0 16 18"><rect x="4" y="1" width="10" height="13" fill="#333" stroke="#ddd" /><rect x="1" y="4" width="5" height="9" fill="#eee" stroke="#333" /><path d="M4 16h10" stroke="#ddd" stroke-width="2" /></svg>
        <svg class="ti" viewBox="0 0 16 18"><path d="M3 6h3l4-4v14l-4-4H3z" fill="#e6e6e6" stroke="#777" /><path d="M12 6c1 2 1 4 0 6" stroke="#ddd" fill="none" /></svg>
        <div class="clock"><span>22:17</span><span>2022/12/12</span></div>
        <span class="show-desk" />
      </div>
    </div>

    <div class="ime">
      <span class="ime-logo">王</span>
      <span class="ime-zh">中</span>
      <svg class="ime-i" viewBox="0 0 18 18"><circle cx="5" cy="5" r="2.500" fill="none" stroke="#1e7fdc" stroke-width="1.500" /><path d="M13 10c2 0 2 3 0 6" stroke="#1e7fdc" stroke-width="2.500" fill="none" /></svg>
      <svg class="ime-i" viewBox="0 0 18 18"><circle cx="9" cy="9" r="7.500" fill="none" stroke="#1e7fdc" stroke-width="1.600" /><circle cx="6.500" cy="7" r="1.100" fill="#1e7fdc" /><circle cx="11.500" cy="7" r="1.100" fill="#1e7fdc" /><path d="M5.500 11c2 2.500 5 2.500 7 0" stroke="#1e7fdc" fill="none" stroke-width="1.300" /></svg>
      <svg class="ime-i" viewBox="0 0 18 18"><path d="M3 12l9-9 3 3-9 9H3z" fill="#1e7fdc" /><path d="M2 17h14" stroke="#1e7fdc" stroke-width="1.500" /></svg>
      <svg class="ime-i" viewBox="0 0 18 18"><path d="M4 1l8 11M14 1L6 12" stroke="#1e7fdc" stroke-width="2" /><circle cx="4.500" cy="14" r="2.500" fill="none" stroke="#1e7fdc" stroke-width="1.500" /><circle cx="13.500" cy="14" r="2.500" fill="none" stroke="#1e7fdc" stroke-width="1.500" /></svg>
      <svg class="ime-i" viewBox="0 0 18 18"><rect x="1" y="3" width="16" height="12" rx="1" fill="#1e7fdc" /><path d="M3 6h2M7 6h2M11 6h2M3 9h2M7 9h2M11 9h2M5 12h8" stroke="#fff" /></svg>
      <svg class="ime-i" viewBox="0 0 18 18"><circle cx="9" cy="5" r="3.500" fill="#bcd6f4" /><path d="M3 17c0-8 12-8 12 0z" fill="#bcd6f4" /></svg>
      <svg class="ime-i" viewBox="0 0 18 18"><path d="M5 2h8l4 4-3 2v9H4V8L1 6z" fill="#1e7fdc" /><circle cx="14" cy="3" r="3" fill="#f0452c" /></svg>
      <svg class="ime-i" viewBox="0 0 18 18"><circle cx="9" cy="9" r="4.500" fill="none" stroke="#1e7fdc" stroke-width="3" /><path d="M9 1v3M9 14v3M2 5l2.500 1.500M13.500 11.500L16 13M2 13l2.500-1.500M13.500 6.500L16 5" stroke="#1e7fdc" stroke-width="2.500" /></svg>
    </div>

    <!-- hand drawn red marks over the grid -->
    <svg class="ink" viewBox="0 0 1920 1080">
      <path d="M405.600 270L426 253.300 459 251H484.700L535.700 256.700 576.500 269.300 617 280 637.800 303.300 655.600 330V376.700L645.400 410 632.700 446.700 617.300 463.300 589.300 485 561 490 510 488.300 449 475 400.500 446.700 372.400 410 359.700 380V336.700L367.300 301.700 387.800 268.300 402 260" fill="none" stroke="#f42a1a" stroke-width="3" stroke-linejoin="round" />
      <path d="M225.500 326.700L238.800 317.300 237.200 320.700 348 315.300 239.800 330V334z" fill="#f42a1a" />
      <path d="M205 359L218.400 350V353.300L305 353.300 220.400 361.700 219.400 367z" fill="#f42a1a" />
      <path d="M220.400 380.700L234.700 373V376.700L312.200 381.300 235.700 385 234.700 390z" fill="#f42a1a" />
    </svg>
  </div>
</template>

<style>
html, body { margin: 0; padding: 0; background: #fff; }
</style>

<style scoped>
.app {
  position: relative;
  width: 1920px;
  height: 1080px;
  overflow: hidden;
  display: flex;
  flex-direction: column;
  background: #f0f0f0;
  color: #111;
  font: 12px/16px "Liberation Sans", "Noto Sans CJK SC", sans-serif;
}
svg { display: block; flex: none; }
i { display: block; font-style: normal; }

.caret { width: 0; height: 0; flex: none; border-left: 2.5px solid transparent; border-right: 2.5px solid transparent; border-top: 3px solid #555; }
.caret.pale { border-top-color: #aaa; }

/* title row */
.titlebar { height: 28px; flex: none; display: grid; grid-template-columns: 1fr auto 1fr; align-items: start; }
.quick {
  justify-self: start;
  margin-left: 40px;
  margin-top: 1px;
  width: 247px;
  height: 21px;
  box-sizing: border-box;
  display: flex;
  align-items: center;
  background: linear-gradient(#fafafa, #e6e6e6);
  border: 1px solid #c4c4c4;
  border-left: none;
  border-radius: 0 11px 11px 0;
}
.qi { width: 16px; height: 16px; }
.app-title { margin-top: 4px; color: #777; line-height: 18px; }
.account { justify-self: end; display: flex; align-items: center; height: 28px; padding-right: 11px; }
.avatar { width: 20px; height: 22px; }
.login { margin-left: 4px; padding-top: 2px; }
.star { width: 23px; height: 25px; margin-left: 12px; }
.helper { margin-left: 3px; padding-top: 2px; }
.winbtn { width: 10px; height: 10px; margin-left: 22px; margin-top: -6px; }
.winbtn.first { margin-left: 30px; }
.logo { position: absolute; left: 4px; top: 3px; width: 38px; height: 38px; }

.ribbon-tabs { height: 22px; flex: none; display: flex; align-items: stretch; padding-left: 48px; }
.rtab { padding: 0 12.500px; line-height: 26px; }
.rtab.active { width: 45px; box-sizing: border-box; padding: 0; margin-right: 2px; text-align: center; color: #0b78d0; background: #f8f8f8; border: 1px solid #c4c4c4; border-bottom: none; margin-bottom: -1px; position: relative; z-index: 1; }
.mdi { margin-left: auto; display: flex; align-items: center; gap: 11px; padding: 0 5px 3px 0; }
.mi { width: 9px; height: 9px; }
.mi.wide { width: 11px; height: 11px; }

/* ribbon */
.ribbon { height: 87px; flex: none; box-sizing: border-box; display: flex; background: #f8f8f8; border-top: 1px solid #c0c0c0; border-bottom: 2px solid #c8c8c8; }
.rgroup { display: flex; flex-direction: column; box-sizing: border-box; padding: 0 5px 0 4px; border-right: 1px solid #dcdcdc; }
.ritems { height: 69px; flex: none; display: flex; }
.rsep { width: 1px; height: 56px; margin: 7px 4px 0 5px; background: #ccc; }
.ritem { display: flex; flex-direction: column; align-items: center; padding: 0 3px; }
.ritem.wide { padding: 0 2px; }
.ritem.tight .rlabel { letter-spacing: -0.5px; }
.ricon { width: 32px; height: 32px; margin-top: 5px; }
.rlabel { margin-top: 3px; white-space: nowrap; line-height: 16px; }
.rcaret { margin-top: 5px; border-top-color: #444; }
.rgroup-label { text-align: center; color: #333; line-height: 15px; }

.doc-tabs { margin-top: 3px; height: 23px; flex: none; box-sizing: border-box; display: flex; background: #fff; border-top: 1px solid #0b78d0; border-right: 1px solid #0b78d0; padding-left: 1px; }
.doc-tab { width: 154px; box-sizing: border-box; padding-left: 10px; line-height: 25px; background: linear-gradient(#f6f6f6, #cfcfcf); }
.doc-tab.active { position: relative; background: #8fb2d0; margin-left: 0; padding-left: 11px; }
.doc-close { position: absolute; right: 9px; top: 0; font-size: 14px; font-family: "Liberation Sans"; }

.nav-tabs { height: 25px; flex: none; box-sizing: border-box; display: flex; padding-left: 2px; background: #fff; border-top: 1px solid #3f7fb0; border-bottom: 1px solid #3f7fb0; border-right: 1px solid #3f7fb0; }
.nav-tab { width: 118.500px; box-sizing: border-box; text-align: center; line-height: 26px; background: linear-gradient(#f6f6f6, #c8c8c8); border-right: 1px solid #a8d4f0; }
.nav-tab.active { background: #8fb2d0; }

/* main area */
.main { flex: 1; min-height: 0; display: flex; background: #fff; border-left: 3px solid #3f7fb0; }
.left { width: 1563px; flex: none; display: flex; flex-direction: column; }

.toolbar { height: 29px; flex: none; box-sizing: border-box; padding-top: 2px; display: flex; align-items: center; background: #fff; white-space: nowrap; }
.tb-icon { width: 18px; height: 18px; }
.tb-sep { width: 1px; height: 22px; background: #bbb; flex: none; }
.tb-box { width: 12px; height: 22px; background: #efefef; display: flex; align-items: center; justify-content: center; flex: none; }

.grid-wrap { height: 746px; flex: none; margin-left: 3px; width: 1557px; display: flex; flex-direction: column; border-right: 1px solid #a6d6f7; border-bottom: 1px solid #a6d6f7; box-sizing: content-box; }
.grid { width: 1557px; table-layout: fixed; border-collapse: collapse; font-size: 12px; }
.grid th, .grid td { height: 23px; padding: 1px 0 0; box-sizing: border-box; border: 1px solid #a6d6f7; white-space: nowrap; overflow: hidden; }
.grid th { font-weight: 400; background: #dfe3e8; line-height: 20px; border-color: #bcd9ee; padding-top: 2px; }
.grid tr.tall td { height: 38px; }
.rownum { text-align: center; background: #dfe3e8; font-size: 11px; }
.ctr { text-align: center; }
.unit { font-size: 11px; }
.txt { padding-left: 4px !important; white-space: pre-line !important; line-height: 15px; vertical-align: middle; }
.calc { font-size: 11px; }
.num { text-align: right; padding-right: 4px !important; font-size: 11px; }
.red { color: #e8180c; }
.code { font-size: 11px; }
.lv0 { padding-left: 12px !important; }
.lv1 { padding-left: 24px !important; }
.lv2 { padding-left: 48px !important; }
.tri { display: inline-block; width: 0; height: 0; margin-right: 3px; border-left: 6px solid transparent; border-bottom: 6px solid #111; }
.total td { background: #ffab9b; }
.bill td { background: #cceaf8; }
.fresh td { background: #ffff90; }
.fresh td.calc { background: #9dd3ff; }
.total td.rownum, .bill td.rownum, .fresh td.rownum { background: #dfe3e8; }

.hbar { margin-top: auto; height: 15px; flex: none; display: flex; background: #f0f0f0; }
.sb-btn { width: 16px; flex: none; box-sizing: border-box; background: #fafafa; border: 1px solid #b0b0b0; display: flex; align-items: center; justify-content: center; }
.sb-btn.v { width: 16px; height: 16px; }
.sb-btn.end { margin-left: auto; }
.vbar .sb-btn.end { margin-left: 0; margin-top: auto; }
.sb-thumb { display: block; box-sizing: border-box; background: #fff; border: 1px solid #b0b0b0; }
.grid-thumb { width: 916px; margin-left: 2px; }
.ar { width: 0; height: 0; border: 3px solid transparent; }
.ar-l { border-right: 4px solid #999; border-left: none; }
.ar-r { border-left: 4px solid #999; border-right: none; }
.ar-u { border-bottom: 4px solid #aaa; border-top: none; }
.ar-d { border-top: 4px solid #aaa; border-bottom: none; }

.aux-head { margin-top: 6px; height: 21px; flex: none; width: 1560px; box-sizing: border-box; padding-right: 5px; display: flex; align-items: center; background: #f0f0f0; }
.aux-title { margin-left: 7px; color: #444; padding-top: 2px; }
.dots { flex: 1; height: 6px; margin: 0 6px; background-image: radial-gradient(#aaa 0.7px, transparent 0.8px); background-size: 3px 3px; }
.aux-ico { width: 9px; height: 13px; margin-left: 8px; }
.aux-tabs { margin: 1px 0 0 3px; height: 20px; flex: none; display: flex; }
.aux-tab { padding: 0 9.600px; box-sizing: border-box; line-height: 22px; background: linear-gradient(#f6f6f6, #cdcdcd); border-right: 1px solid #a8d4f0; border-top: 1px solid #a8d4f0; }
.aux-tab.active { background: #8fb2d0; }

/* right side */
.panel { width: 316px; flex: none; box-sizing: border-box; padding: 3px 3px 0 3px; display: flex; flex-direction: column; }
.panel-head { height: 21px; flex: none; display: flex; align-items: center; background: #f0f0f0; }
.panel-title { margin-left: 5px; color: #555; font-size: 13px; letter-spacing: 1px; }
.quota-row { margin-top: 3px; height: 21px; flex: none; display: flex; align-items: center; padding-left: 3px; }
.quota-label { width: 38px; }
.select { flex: 1; height: 21px; box-sizing: border-box; padding-left: 3px; display: flex; align-items: center; justify-content: space-between; background: linear-gradient(#f8f8f8, #e2e2e2); border: 1px solid #a8a8a8; }
.sel-ar { margin-right: 5px; width: 0; height: 0; border-left: 4px solid transparent; border-right: 4px solid transparent; border-top: 5px solid #111; }
.search { margin: 3px 0 0 1px; height: 21px; flex: none; box-sizing: border-box; display: flex; align-items: center; justify-content: space-between; padding: 0 4px 0 6px; border: 1px solid #111; background: #fff; }
.ph { color: #a8a8a8; padding-top: 2px; }
.mag { width: 16px; height: 16px; }

.tree-frame { margin: 2px 0 0 1px; height: 348px; flex: none; box-sizing: border-box; display: flex; background: #f0f0f0; border: 1px solid #a6d6f7; }
.tree { width: 288px; flex: none; height: 346px; background: #fff; }
.tree-row { height: 23px; box-sizing: border-box; position: relative; line-height: 26px; border-bottom: 1px solid #a6d6f7; white-space: nowrap; }
.tree-row.on { background: #cceaf8; }
.tree-row.pick { background: #ffff90; }
.tree-tri { position: absolute; margin-left: -12px; margin-top: 9px; width: 0; height: 0; }
.tree-tri.down { border-left: 6px solid transparent; border-bottom: 6px solid #111; }
.tree-tri.right { border-left: 5px solid #111; border-top: 4px solid transparent; border-bottom: 4px solid transparent; margin-top: 8px; }
.vbar { width: 16px; margin-left: 1px; display: flex; flex-direction: column; flex: none; }
.tree-thumb { height: 129px; margin-top: 1px; }
.quota-thumb { height: 156px; margin-top: 1px; }

.quota-frame { margin: 7px 0 0 1px; height: 347px; flex: none; box-sizing: border-box; display: flex; flex-direction: column; background: #f0f0f0; border: 1px solid #a6d6f7; }
.quota-body { height: 329px; flex: none; display: flex; }
.quota-list { width: 288px; flex: none; height: 329px; overflow: hidden; background: #fff; }
.q-row { display: grid; grid-template-columns: 50px 178px 60px; height: 23px; box-sizing: border-box; border-bottom: 1px solid #a6d6f7; line-height: 24px; text-align: center; white-space: nowrap; }
.q-row > span { border-right: 1px solid #a6d6f7; overflow: hidden; }
.q-row > span:last-child { border-right: none; }
.q-row .q-name { text-align: left; padding-left: 4px; }
.q-row.head { background: #dfe3e8; border-bottom-color: #bcd9ee; }
.q-row.head > span { border-right-color: #bcd9ee; }
.q-row.pick { background: #ffff90; }
.q-hbar { height: 16px; flex: none; display: flex; width: 288px; position: relative; }
.q-thumb { width: 211px; margin-left: 1px; }
.q-corner { position: absolute; left: 288px; top: 0; width: 18px; height: 16px; background: #dfe3e8; }

.wrap-check { margin: 7px 0 0 1px; height: 13px; flex: none; display: flex; align-items: center; gap: 4px; }
.box { width: 13px; height: 13px; box-sizing: border-box; background: #fff; border: 1px solid #777; }
.panel-tabs { margin: 5px 0 0 1px; height: 22px; flex: none; display: flex; width: 178px; background: linear-gradient(#c8c8c8 4px, transparent 4px); }
.ptab { width: 60px; margin-right: -6px; text-align: center; line-height: 24px; padding-left: 6px; box-sizing: border-box; background: linear-gradient(#f0f0f0, #fff); clip-path: polygon(0 0, 100% 0, 100% 100%, 25% 100%); }
.ptab.active { background: #8fb2d0; width: 62px; padding-left: 4px; }

.side { width: 36px; flex: none; box-sizing: border-box; padding: 3px 0 0 1px; display: flex; flex-direction: column; align-items: center; gap: 2px; border-left: 1px solid #3f7fb0; border-right: 1px solid #3f7fb0; }
.side-btn { width: 28px; height: 28px; border-radius: 6px; display: flex; align-items: center; justify-content: center; }
.side-btn.on { background: #c8e0ff; }
.side-btn svg { width: 24px; height: 24px; }

/* status and taskbar */
.status { height: 25px; flex: none; box-sizing: border-box; padding-top: 2px; display: flex; align-items: center; background: #0a78cc; color: #e8f4ff; white-space: nowrap; }
.st-id { width: 225px; padding-left: 5px; box-sizing: border-box; flex: none; }
.st-path { width: 1148px; flex: none; }
.st-info { width: 500px; flex: none; }
.st-zoom { font-size: 16px; width: 20px; text-align: center; color: #fff; }
.st-zoom.big { font-size: 20px; }

.taskbar { height: 40px; flex: none; box-sizing: border-box; display: flex; align-items: center; border-top: 1px solid #33465c; background: linear-gradient(90deg, #a6bfd9 0, #a6bfd9 1500px, #8294a8 1535px); }
.orb { width: 38px; height: 38px; margin-left: 8px; }
.web-search { margin-left: 12px; width: 248px; height: 34px; display: flex; align-items: center; background: #fff; font-size: 14px; flex: none; }
.ws-mag { width: 16px; height: 16px; margin-left: 8px; }
.ws-text { margin-left: 11px; width: 135px; color: #8b8b8b; white-space: nowrap; overflow: hidden; }
.ws-btn { width: 78px; height: 34px; line-height: 34px; text-align: center; background: #5570f0; color: #fff; margin-left: auto; }
.task { width: 59px; height: 38px; box-sizing: border-box; display: flex; align-items: center; justify-content: center; flex: none; margin-left: 4px; background: linear-gradient(#d6e4f2, #a8c0da); border: 1px solid #7d93ab; border-radius: 2px; }
.task svg { width: 34px; height: 34px; }
.task.first { width: 51px; margin-left: 9px; }
.task.first + .task { margin-left: 11px; }
.tray { margin-left: auto; display: flex; align-items: center; height: 39px; }
.tray-wang { width: 16px; height: 18px; margin-top: -4px; border-radius: 4px; background: #2a8cf0; color: #fff; font-size: 12px; line-height: 18px; text-align: center; font-weight: 700; margin-right: 14.500px; }
.ti { width: 17px; height: 18px; margin-right: 7px; }
.clock { width: 74px; display: flex; flex-direction: column; align-items: center; color: #f2f4f8; line-height: 18px; }
.show-desk { width: 14px; height: 39px; margin-left: 2px; background: #6a7a8c; border-left: 1px solid #99a8b8; box-sizing: border-box; }

.ime { position: absolute; left: 1695px; top: 994px; width: 225px; height: 27px; box-sizing: border-box; display: flex; align-items: center; padding-left: 18px; gap: 6.500px; background: #fff; border: 1px solid #a8d4f0; border-right: none; }
.ime-logo { position: absolute; left: -19px; top: -2px; width: 28px; height: 28px; border-radius: 50% 50% 50% 6px; background: #2a80f0; color: #fff; text-align: center; font: 700 17px/28px "Noto Sans CJK SC", sans-serif; }
.ime-zh { color: #1e7fdc; font: 700 16px/20px "Noto Sans CJK SC", sans-serif; }
.ime-i { width: 17px; height: 17px; }

.ink { position: absolute; left: 0; top: 0; width: 1920px; height: 1080px; pointer-events: none; }
</style>
